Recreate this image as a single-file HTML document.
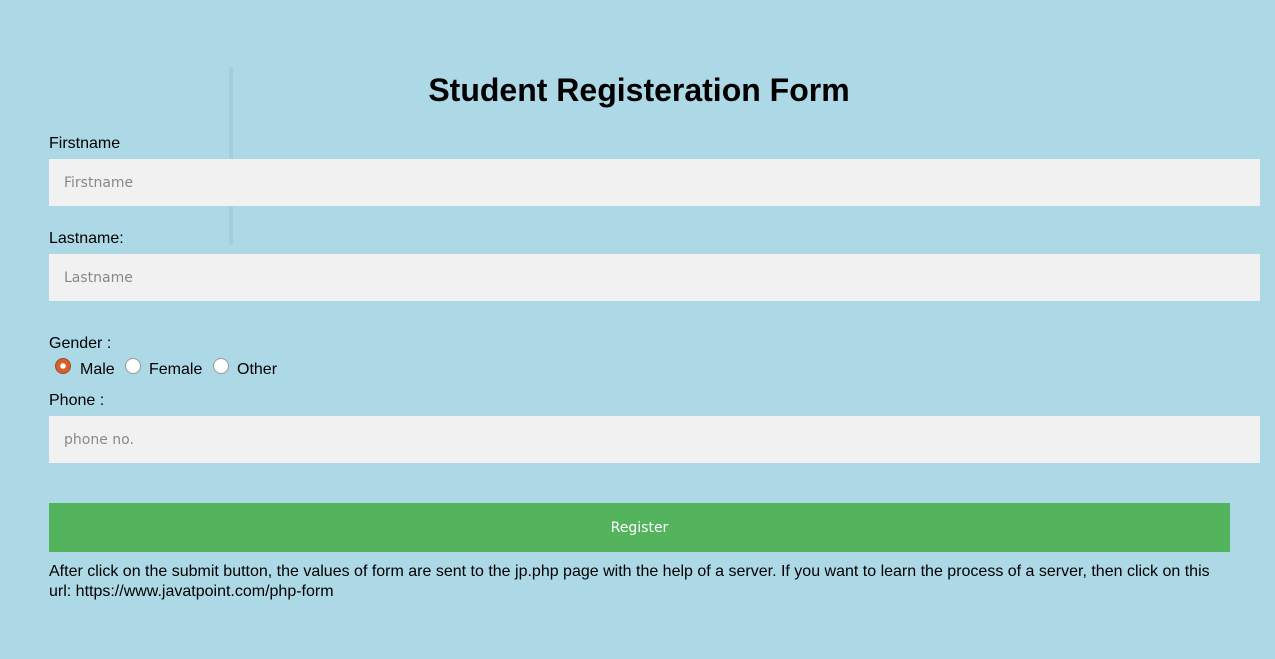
<!DOCTYPE html>
<html><head><meta charset="utf-8"><style>
body{margin:0;width:1275px;height:659px;background:#add8e6;font-family:"Liberation Sans",Arial,sans-serif;position:relative;overflow:hidden;color:#000}
.a{position:absolute}
.lbl{font-size:16px;line-height:18px}
.inp{left:49px;width:1211px;height:47px;background:#f1f1f1;font-family:"DejaVu Sans",sans-serif;font-size:14px;color:#888;line-height:48px;text-indent:15px}
.r{position:absolute;top:358px;width:16px;height:16px;border-radius:50%;background:#fff;border:1px solid #999;box-sizing:border-box}
</style></head><body>
<div class="a" style="left:229px;top:67px;width:4px;height:178px;background:rgba(150,190,200,0.35)"></div>
<div class="a" style="left:0;width:1278px;top:70px;text-align:center;font-weight:bold;font-size:32px;line-height:40px">Student Registeration Form</div>
<div class="a lbl" style="left:49px;top:135px">Firstname</div>
<div class="a inp" style="top:159px">Firstname</div>
<div class="a lbl" style="left:49px;top:230px">Lastname:</div>
<div class="a inp" style="top:254px">Lastname</div>
<div class="a lbl" style="left:49px;top:335px">Gender :</div>
<span class="r" style="left:55px;background:radial-gradient(circle,#fff 0 2.5px,#d4602e 3px);border-color:#a0482a"></span>
<div class="a lbl" style="left:80px;top:361px">Male</div>
<span class="r" style="left:125px"></span>
<div class="a lbl" style="left:149px;top:361px">Female</div>
<span class="r" style="left:213px"></span>
<div class="a lbl" style="left:237px;top:361px">Other</div>
<div class="a lbl" style="left:49px;top:392px">Phone :</div>
<div class="a inp" style="top:416px">phone no.</div>
<div class="a" style="left:49px;top:503px;width:1181px;height:49px;background:#54b45e;color:#fff;text-align:center;line-height:50px;font-family:'DejaVu Sans',sans-serif;font-size:14px">Register</div>
<div class="a lbl" style="left:49px;top:562px;width:1180px;line-height:20px">After click on the submit button, the values of form are sent to the jp.php page with the help of a server. If you want to learn the process of a server, then click on this url: https://www.javatpoint.com/php-form</div>
</body></html>
